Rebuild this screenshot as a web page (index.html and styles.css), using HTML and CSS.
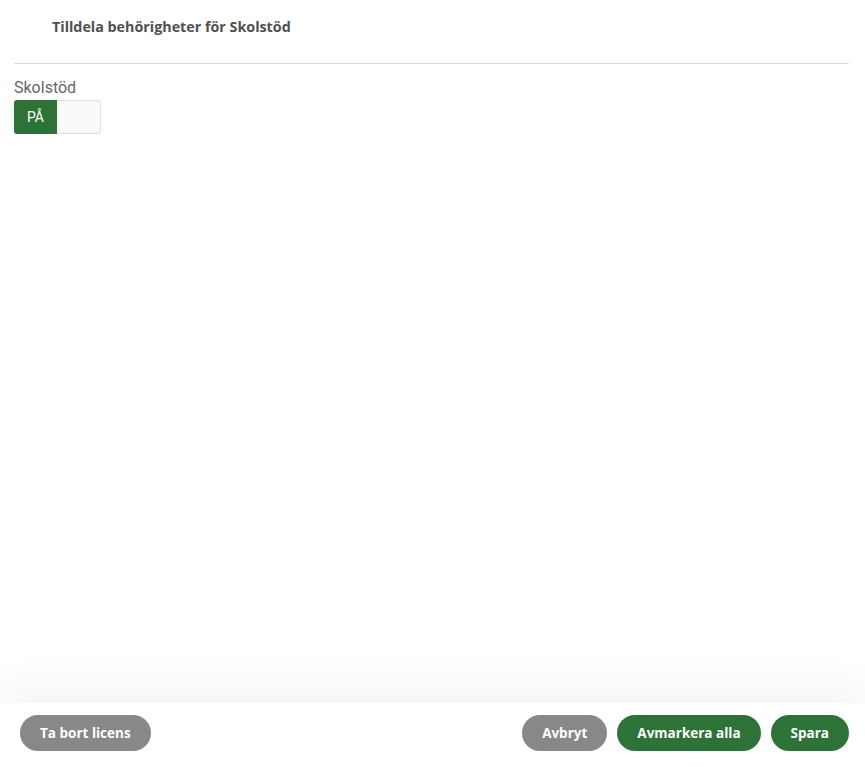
FILE: index.html
```html
<!DOCTYPE html>
<html lang="sv">
  <head>
    <meta charset="UTF-8" />
    <meta name="viewport" content="width=device-width, initial-scale=1.0" />
    <title>Tilldela behörigheter</title>
    <link rel="stylesheet" href="styles.css">
  </head>
  <body>
    <div class="dialog">
      <div class="dialog-header">
        <h2>Tilldela behörigheter för Skolstöd</h2>
      </div>

      <div class="dialog-body">
        <label class="field-label">Skolstöd</label>
        <div class="toggle">
          <span class="toggle-on">PÅ</span>
          <span class="toggle-off"></span>
        </div>
      </div>

      <div class="dialog-footer">
        <button class="btn btn-grey">Ta bort licens</button>
        <div class="footer-right">
          <button class="btn btn-grey">Avbryt</button>
          <button class="btn btn-green">Avmarkera alla</button>
          <button class="btn btn-green">Spara</button>
        </div>
      </div>
    </div>
  </body>
</html>
```

FILE: styles.css
```css
/* Reset */
* {
  margin: 0;
  padding: 0;
  box-sizing: border-box;
}

body {
  font-family: "Open Sans", Arial, sans-serif;
  background: #fff;
  color: #555;
}

.dialog {
  display: flex;
  flex-direction: column;
  height: 100vh;
}

/* Header */
.dialog-header {
  height: 64px;
  margin: 0 16px 0 14px;
  padding: 17px 0 0 38px;
  border-bottom: 1px solid #dcdcdc;
}

.dialog-header h2 {
  font-size: 14.3px;
  font-weight: 700;
  color: #505050;
}

/* Body */
.dialog-body {
  flex: 1;
  padding: 14px 14px 0;
}

.field-label {
  display: block;
  font-family: Roboto, sans-serif;
  font-size: 16px;
  color: #666;
  line-height: 20px;
  margin-bottom: 2px;
}

.toggle {
  display: flex;
  width: 87px;
  height: 34px;
}

.toggle-on {
  width: 43px;
  background: #2d7337;
  color: #fff;
  font-family: Roboto, sans-serif;
  font-size: 14px;
  display: flex;
  align-items: center;
  justify-content: center;
  border-radius: 3px 0 0 3px;
}

.toggle-off {
  flex: 1;
  background: #fafafa;
  border: 1px solid #e0e0e0;
  border-left: none;
  border-radius: 0 3px 3px 0;
}

/* Footer */
.dialog-footer {
  height: 65px;
  display: flex;
  align-items: center;
  justify-content: space-between;
  padding: 0 16px 5px 20px;
  background: #fff;
  box-shadow: 0 -18px 40px rgba(0, 0, 0, 0.045);
}

.footer-right {
  display: flex;
  gap: 10px;
}

.btn {
  height: 36px;
  padding: 0 20px;
  border: none;
  border-radius: 18px;
  color: #fff;
  font-family: "Open Sans", Arial, sans-serif;
  font-size: 13.5px;
  font-weight: 700;
  cursor: pointer;
}

.btn-grey {
  background: #888;
}

.btn-green {
  background: #2d7337;
}
```
